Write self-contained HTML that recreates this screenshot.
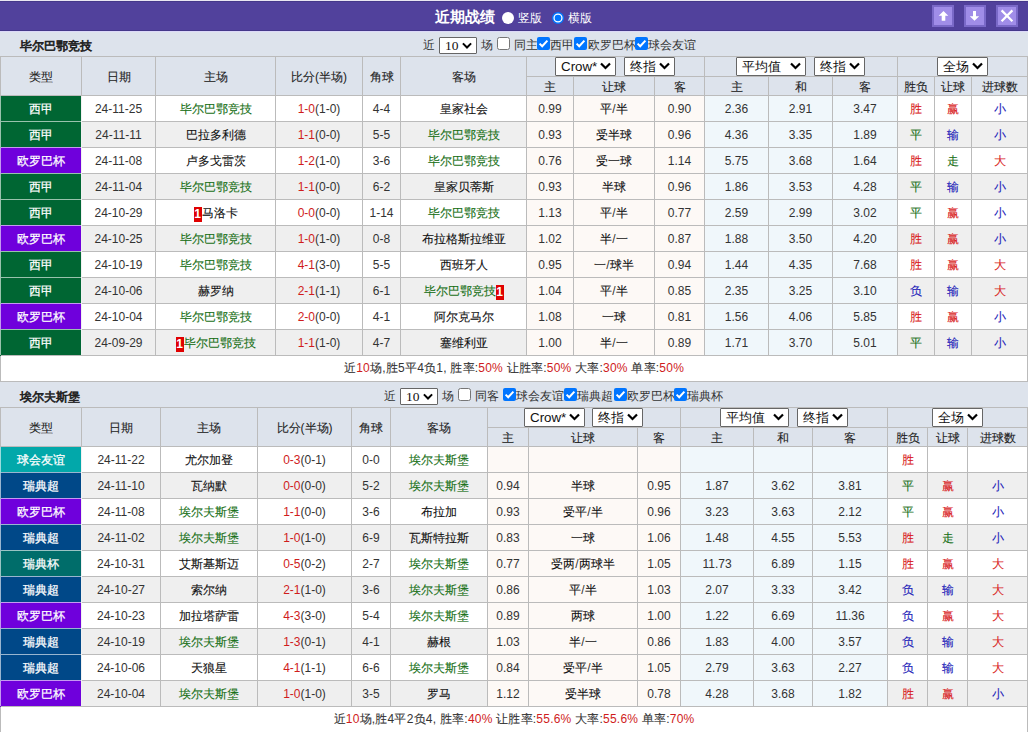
<!DOCTYPE html>
<html><head><meta charset="utf-8"><style>
html,body{margin:0;padding:0;background:#fff;width:1028px;height:732px;overflow:hidden}
body{position:relative;font-family:"Liberation Sans",sans-serif;font-size:12px;color:#333}
body div{position:absolute;box-sizing:content-box}
.c{text-align:center;white-space:nowrap;overflow:hidden}
.k{-webkit-text-stroke:0.1px currentColor}
.d{color:#111}
.w .k{-webkit-text-stroke:0.25px currentColor}
.sel{background:#fff;border:1px solid #666;border-radius:1px;color:#111;white-space:nowrap}
.rc{display:inline-block;background:#e00000;color:#fff;width:8px;height:15px;line-height:15px;text-align:center;vertical-align:-1px;font-size:12px;font-weight:bold}
svg{display:block}
</style></head><body>
<div style="left:0px;top:0px;width:1028px;height:31px;background:#51419c"></div>
<div style="left:0px;top:0px;width:1028px;height:1px;background:#e9e6f2"></div>
<div style="left:0px;top:1px;width:1028px;height:1px;background:#45388a"></div>
<div style="left:0px;top:30px;width:1028px;height:1px;background:#45388a"></div>
<div style="left:0px;top:31px;width:1028px;height:1px;background:#dcd9f8"></div>
<div style="left:435px;top:2px;height:29px;line-height:29px;font-size:15px;font-weight:bold;color:#fff;white-space:nowrap">近期战绩</div>
<div style="left:501.5px;top:11.5px;width:12px;height:12px;border-radius:50%;background:#fff"></div>
<div style="left:518px;top:3.5px;height:29px;line-height:29px;color:#fff;white-space:nowrap">竖版</div>
<div style="left:551.5px;top:11.5px;width:12px;height:12px;"><svg width="12" height="12"><circle cx="6" cy="6" r="5.3" fill="#fff" stroke="#0075ff" stroke-width="1.4"/><circle cx="6" cy="6" r="3.3" fill="#0075ff"/></svg></div>
<div style="left:568px;top:3.5px;height:29px;line-height:29px;color:#fff;white-space:nowrap">横版</div>
<div style="left:932px;top:5px;width:18px;height:18px;background:#a08de8;border:2px solid #7a69c8"><svg style="position:absolute;left:-2px;top:-2px" width="22" height="22" viewBox="0 0 22 22"><path d="M11.5 5.9 L16.3 10.8 L13.3 10.8 L13.3 15.8 L9.7 15.8 L9.7 10.8 L6.7 10.8 Z" fill="#fff"/></svg></div>
<div style="left:964px;top:5px;width:18px;height:18px;background:#a08de8;border:2px solid #7a69c8"><svg style="position:absolute;left:-2px;top:-2px" width="22" height="22" viewBox="0 0 22 22"><path d="M10.5 15.8 L15.2 11.2 L12 11.2 L12 5.9 L9 5.9 L9 11.2 L5.8 11.2 Z" fill="#fff"/></svg></div>
<div style="left:996px;top:5px;width:18px;height:18px;background:#a08de8;border:2px solid #7a69c8"><svg style="position:absolute;left:-2px;top:-2px" width="22" height="22" viewBox="0 0 22 22"><path d="M5.6 5.4 L16.4 16.2 M16.4 5.4 L5.6 16.2" stroke="#fff" stroke-width="2.2"/></svg></div>
<div style="left:0px;top:31px;width:1028px;height:25px;background:#dde3ec"></div>
<div style="left:20px;top:34px;height:25px;line-height:25px;white-space:nowrap;color:#222;-webkit-text-stroke:0.65px #222">毕尔巴鄂竞技</div>
<div style="left:423px;top:33px;height:25px;line-height:25px;white-space:nowrap;color:#333">近</div>
<div class="sel" style="left:439px;top:37px;width:36px;height:15px;line-height:16px;font-size:13.5px;font-family:Liberation Serif;text-indent:5px">10<svg width="10" height="7.3" viewBox="0 0 11 8" style="position:absolute;right:4.5px;top:3.5px"><path d="M1 1.5 L5.5 6 L10 1.5" fill="none" stroke="#000" stroke-width="2.2"/></svg></div>
<div style="left:481px;top:33px;height:25px;line-height:25px;white-space:nowrap;color:#333">场</div>
<div style="left:497px;top:37px;width:13px;height:13px"><svg width="13" height="13" viewBox="0 0 13 13"><rect x="0.5" y="0.5" width="12" height="12" rx="2" fill="#fff" stroke="#767676"/></svg></div>
<div style="left:513.5px;top:33px;height:25px;line-height:25px;white-space:nowrap;color:#333">同主</div>
<div style="left:537px;top:37px;width:13px;height:13px"><svg width="13" height="13" viewBox="0 0 13 13"><rect x="0" y="0" width="13" height="13" rx="2" fill="#0075ff"/><path d="M2.6 6.6 L5.2 9.2 L10.4 3.6" fill="none" stroke="#fff" stroke-width="2"/></svg></div>
<div style="left:550px;top:33px;height:25px;line-height:25px;white-space:nowrap;color:#333">西甲</div>
<div style="left:574px;top:37px;width:13px;height:13px"><svg width="13" height="13" viewBox="0 0 13 13"><rect x="0" y="0" width="13" height="13" rx="2" fill="#0075ff"/><path d="M2.6 6.6 L5.2 9.2 L10.4 3.6" fill="none" stroke="#fff" stroke-width="2"/></svg></div>
<div style="left:588px;top:33px;height:25px;line-height:25px;white-space:nowrap;color:#333">欧罗巴杯</div>
<div style="left:635px;top:37px;width:13px;height:13px"><svg width="13" height="13" viewBox="0 0 13 13"><rect x="0" y="0" width="13" height="13" rx="2" fill="#0075ff"/><path d="M2.6 6.6 L5.2 9.2 L10.4 3.6" fill="none" stroke="#fff" stroke-width="2"/></svg></div>
<div style="left:648px;top:33px;height:25px;line-height:25px;white-space:nowrap;color:#333">球会友谊</div>
<div style="left:0px;top:56px;width:1028px;height:39px;background:#dde3ec"></div>
<div style="left:0px;top:95px;width:1028px;height:26px;background:#ffffff"></div>
<div style="left:527px;top:96px;width:177px;height:25px;background:#fdf9f6"></div>
<div style="left:705px;top:96px;width:192px;height:25px;background:#f0f7fb"></div>
<div style="left:0px;top:96px;width:81px;height:25px;background:#006633"></div>
<div style="left:0px;top:121px;width:1028px;height:26px;background:#efefef"></div>
<div style="left:527px;top:122px;width:177px;height:25px;background:#fdf9f6"></div>
<div style="left:705px;top:122px;width:192px;height:25px;background:#f0f7fb"></div>
<div style="left:0px;top:122px;width:81px;height:25px;background:#006633"></div>
<div style="left:0px;top:147px;width:1028px;height:26px;background:#ffffff"></div>
<div style="left:527px;top:148px;width:177px;height:25px;background:#fdf9f6"></div>
<div style="left:705px;top:148px;width:192px;height:25px;background:#f0f7fb"></div>
<div style="left:0px;top:148px;width:81px;height:25px;background:#6f00dc"></div>
<div style="left:0px;top:173px;width:1028px;height:26px;background:#efefef"></div>
<div style="left:527px;top:174px;width:177px;height:25px;background:#fdf9f6"></div>
<div style="left:705px;top:174px;width:192px;height:25px;background:#f0f7fb"></div>
<div style="left:0px;top:174px;width:81px;height:25px;background:#006633"></div>
<div style="left:0px;top:199px;width:1028px;height:26px;background:#ffffff"></div>
<div style="left:527px;top:200px;width:177px;height:25px;background:#fdf9f6"></div>
<div style="left:705px;top:200px;width:192px;height:25px;background:#f0f7fb"></div>
<div style="left:0px;top:200px;width:81px;height:25px;background:#006633"></div>
<div style="left:0px;top:225px;width:1028px;height:26px;background:#efefef"></div>
<div style="left:527px;top:226px;width:177px;height:25px;background:#fdf9f6"></div>
<div style="left:705px;top:226px;width:192px;height:25px;background:#f0f7fb"></div>
<div style="left:0px;top:226px;width:81px;height:25px;background:#6f00dc"></div>
<div style="left:0px;top:251px;width:1028px;height:26px;background:#ffffff"></div>
<div style="left:527px;top:252px;width:177px;height:25px;background:#fdf9f6"></div>
<div style="left:705px;top:252px;width:192px;height:25px;background:#f0f7fb"></div>
<div style="left:0px;top:252px;width:81px;height:25px;background:#006633"></div>
<div style="left:0px;top:277px;width:1028px;height:26px;background:#efefef"></div>
<div style="left:527px;top:278px;width:177px;height:25px;background:#fdf9f6"></div>
<div style="left:705px;top:278px;width:192px;height:25px;background:#f0f7fb"></div>
<div style="left:0px;top:278px;width:81px;height:25px;background:#006633"></div>
<div style="left:0px;top:303px;width:1028px;height:26px;background:#ffffff"></div>
<div style="left:527px;top:304px;width:177px;height:25px;background:#fdf9f6"></div>
<div style="left:705px;top:304px;width:192px;height:25px;background:#f0f7fb"></div>
<div style="left:0px;top:304px;width:81px;height:25px;background:#6f00dc"></div>
<div style="left:0px;top:329px;width:1028px;height:26px;background:#efefef"></div>
<div style="left:527px;top:330px;width:177px;height:25px;background:#fdf9f6"></div>
<div style="left:705px;top:330px;width:192px;height:25px;background:#f0f7fb"></div>
<div style="left:0px;top:330px;width:81px;height:25px;background:#006633"></div>
<div style="left:0px;top:355px;width:1028px;height:26px;background:#fff"></div>
<div style="left:0px;top:56px;width:1028px;height:1px;background:#bbbbbb"></div>
<div style="left:526px;top:76px;width:502px;height:1px;background:#bbbbbb"></div>
<div style="left:0px;top:95px;width:1028px;height:1px;background:#bbbbbb"></div>
<div style="left:0px;top:121px;width:1028px;height:1px;background:#bbbbbb"></div>
<div style="left:0px;top:147px;width:1028px;height:1px;background:#bbbbbb"></div>
<div style="left:0px;top:173px;width:1028px;height:1px;background:#bbbbbb"></div>
<div style="left:0px;top:199px;width:1028px;height:1px;background:#bbbbbb"></div>
<div style="left:0px;top:225px;width:1028px;height:1px;background:#bbbbbb"></div>
<div style="left:0px;top:251px;width:1028px;height:1px;background:#bbbbbb"></div>
<div style="left:0px;top:277px;width:1028px;height:1px;background:#bbbbbb"></div>
<div style="left:0px;top:303px;width:1028px;height:1px;background:#bbbbbb"></div>
<div style="left:0px;top:329px;width:1028px;height:1px;background:#bbbbbb"></div>
<div style="left:0px;top:355px;width:1028px;height:1px;background:#bbbbbb"></div>
<div style="left:0px;top:96px;width:81px;height:25px;background:#006633"></div>
<div style="left:0px;top:121px;width:81px;height:26px;background:#006633"></div>
<div style="left:0px;top:121px;width:81px;height:1px;background:rgba(255,255,255,0.6)"></div>
<div style="left:0px;top:147px;width:81px;height:26px;background:#6f00dc"></div>
<div style="left:0px;top:147px;width:81px;height:1px;background:rgba(255,255,255,0.6)"></div>
<div style="left:0px;top:173px;width:81px;height:26px;background:#006633"></div>
<div style="left:0px;top:173px;width:81px;height:1px;background:rgba(255,255,255,0.6)"></div>
<div style="left:0px;top:199px;width:81px;height:26px;background:#006633"></div>
<div style="left:0px;top:199px;width:81px;height:1px;background:rgba(255,255,255,0.6)"></div>
<div style="left:0px;top:225px;width:81px;height:26px;background:#6f00dc"></div>
<div style="left:0px;top:225px;width:81px;height:1px;background:rgba(255,255,255,0.6)"></div>
<div style="left:0px;top:251px;width:81px;height:26px;background:#006633"></div>
<div style="left:0px;top:251px;width:81px;height:1px;background:rgba(255,255,255,0.6)"></div>
<div style="left:0px;top:277px;width:81px;height:26px;background:#006633"></div>
<div style="left:0px;top:277px;width:81px;height:1px;background:rgba(255,255,255,0.6)"></div>
<div style="left:0px;top:303px;width:81px;height:26px;background:#6f00dc"></div>
<div style="left:0px;top:303px;width:81px;height:1px;background:rgba(255,255,255,0.6)"></div>
<div style="left:0px;top:329px;width:81px;height:26px;background:#006633"></div>
<div style="left:0px;top:329px;width:81px;height:1px;background:rgba(255,255,255,0.6)"></div>
<div style="left:0px;top:56px;width:1px;height:299px;background:#bbbbbb"></div>
<div style="left:81px;top:56px;width:1px;height:299px;background:#bbbbbb"></div>
<div style="left:155px;top:56px;width:1px;height:299px;background:#bbbbbb"></div>
<div style="left:275px;top:56px;width:1px;height:299px;background:#bbbbbb"></div>
<div style="left:362px;top:56px;width:1px;height:299px;background:#bbbbbb"></div>
<div style="left:400px;top:56px;width:1px;height:299px;background:#bbbbbb"></div>
<div style="left:526px;top:56px;width:1px;height:299px;background:#bbbbbb"></div>
<div style="left:573px;top:76px;width:1px;height:279px;background:#bbbbbb"></div>
<div style="left:654px;top:76px;width:1px;height:279px;background:#bbbbbb"></div>
<div style="left:704px;top:56px;width:1px;height:299px;background:#bbbbbb"></div>
<div style="left:768px;top:76px;width:1px;height:279px;background:#bbbbbb"></div>
<div style="left:832px;top:76px;width:1px;height:279px;background:#bbbbbb"></div>
<div style="left:897px;top:56px;width:1px;height:299px;background:#bbbbbb"></div>
<div style="left:934px;top:76px;width:1px;height:279px;background:#bbbbbb"></div>
<div style="left:971px;top:76px;width:1px;height:279px;background:#bbbbbb"></div>
<div style="left:1027px;top:56px;width:1px;height:299px;background:#bbbbbb"></div>
<div style="left:0px;top:355px;width:1px;height:26px;background:#bbbbbb"></div>
<div style="left:1027px;top:355px;width:1px;height:26px;background:#bbbbbb"></div>
<div style="left:81px;top:96px;width:1px;height:259px;background:rgba(255,255,255,0.8)"></div>
<div style="left:0px;top:96px;width:1px;height:26px;background:#006633"></div>
<div style="left:0px;top:122px;width:1px;height:26px;background:#006633"></div>
<div style="left:0px;top:148px;width:1px;height:26px;background:#6f00dc"></div>
<div style="left:0px;top:174px;width:1px;height:26px;background:#006633"></div>
<div style="left:0px;top:200px;width:1px;height:26px;background:#006633"></div>
<div style="left:0px;top:226px;width:1px;height:26px;background:#6f00dc"></div>
<div style="left:0px;top:252px;width:1px;height:26px;background:#006633"></div>
<div style="left:0px;top:278px;width:1px;height:26px;background:#006633"></div>
<div style="left:0px;top:304px;width:1px;height:26px;background:#6f00dc"></div>
<div style="left:0px;top:330px;width:1px;height:26px;background:#006633"></div>
<div style="left:0px;top:96px;width:1px;height:259px;background:rgba(255,255,255,0.6)"></div>
<div class="c" style="left:1px;top:58px;width:80px;height:38px;line-height:38px;color:#222"><span class="k">类型</span></div>
<div class="c" style="left:82px;top:58px;width:73px;height:38px;line-height:38px;color:#222"><span class="k">日期</span></div>
<div class="c" style="left:156px;top:58px;width:119px;height:38px;line-height:38px;color:#222"><span class="k">主场</span></div>
<div class="c" style="left:276px;top:58px;width:86px;height:38px;line-height:38px;color:#222"><span class="k">比分</span>(<span class="k">半场</span>)</div>
<div class="c" style="left:363px;top:58px;width:37px;height:38px;line-height:38px;color:#222"><span class="k">角球</span></div>
<div class="c" style="left:401px;top:58px;width:125px;height:38px;line-height:38px;color:#222"><span class="k">客场</span></div>
<div class="c" style="left:527px;top:78px;width:46px;height:18px;line-height:18px;color:#222"><span class="k">主</span></div>
<div class="c" style="left:574px;top:78px;width:80px;height:18px;line-height:18px;color:#222"><span class="k">让球</span></div>
<div class="c" style="left:655px;top:78px;width:49px;height:18px;line-height:18px;color:#222"><span class="k">客</span></div>
<div class="c" style="left:705px;top:78px;width:63px;height:18px;line-height:18px;color:#222"><span class="k">主</span></div>
<div class="c" style="left:769px;top:78px;width:63px;height:18px;line-height:18px;color:#222"><span class="k">和</span></div>
<div class="c" style="left:833px;top:78px;width:64px;height:18px;line-height:18px;color:#222"><span class="k">客</span></div>
<div class="c" style="left:898px;top:78px;width:36px;height:18px;line-height:18px;color:#222"><span class="k">胜负</span></div>
<div class="c" style="left:935px;top:78px;width:36px;height:18px;line-height:18px;color:#222"><span class="k">让球</span></div>
<div class="c" style="left:972px;top:78px;width:55px;height:18px;line-height:18px;color:#222"><span class="k">进球数</span></div>
<div class="sel" style="left:555px;top:57px;width:59px;height:17px;line-height:18px;font-size:13.33px;text-indent:5px">Crow*<svg width="11" height="8" viewBox="0 0 11 8" style="position:absolute;right:4px;top:4px"><path d="M1 1.5 L5.5 6 L10 1.5" fill="none" stroke="#000" stroke-width="2.2"/></svg></div>
<div class="sel" style="left:624px;top:57px;width:49px;height:17px;line-height:18px;font-size:13.33px;text-indent:5px">终指<svg width="11" height="8" viewBox="0 0 11 8" style="position:absolute;right:4px;top:4px"><path d="M1 1.5 L5.5 6 L10 1.5" fill="none" stroke="#000" stroke-width="2.2"/></svg></div>
<div class="sel" style="left:736px;top:57px;width:68px;height:17px;line-height:18px;font-size:13.33px;text-indent:5px">平均值<svg width="11" height="8" viewBox="0 0 11 8" style="position:absolute;right:4px;top:4px"><path d="M1 1.5 L5.5 6 L10 1.5" fill="none" stroke="#000" stroke-width="2.2"/></svg></div>
<div class="sel" style="left:814px;top:57px;width:49px;height:17px;line-height:18px;font-size:13.33px;text-indent:5px">终指<svg width="11" height="8" viewBox="0 0 11 8" style="position:absolute;right:4px;top:4px"><path d="M1 1.5 L5.5 6 L10 1.5" fill="none" stroke="#000" stroke-width="2.2"/></svg></div>
<div class="sel" style="left:937px;top:57px;width:49px;height:17px;line-height:18px;font-size:13.33px;text-indent:5px">全场<svg width="11" height="8" viewBox="0 0 11 8" style="position:absolute;right:4px;top:4px"><path d="M1 1.5 L5.5 6 L10 1.5" fill="none" stroke="#000" stroke-width="2.2"/></svg></div>
<div class="c w" style="left:1px;top:97px;width:80px;height:25px;line-height:25px;color:#fff"><span class="k">西甲</span></div>
<div class="c" style="left:82px;top:97px;width:73px;height:25px;line-height:25px;">24-11-25</div>
<div class="c" style="left:156px;top:97px;width:119px;height:25px;line-height:25px;"><span style="color:#177016"><span class="k">毕尔巴鄂竞技</span></span></div>
<div class="c" style="left:276px;top:97px;width:86px;height:25px;line-height:25px;"><span style="color:#cf1c1c">1-0</span>(1-0)</div>
<div class="c" style="left:363px;top:97px;width:37px;height:25px;line-height:25px;">4-4</div>
<div class="c" style="left:401px;top:97px;width:125px;height:25px;line-height:25px;"><span class="k d">皇家社会</span></div>
<div class="c" style="left:527px;top:97px;width:46px;height:25px;line-height:25px;">0.99</div>
<div class="c" style="left:574px;top:97px;width:80px;height:25px;line-height:25px;"><span class="k d">平</span>/<span class="k d">半</span></div>
<div class="c" style="left:655px;top:97px;width:49px;height:25px;line-height:25px;">0.90</div>
<div class="c" style="left:705px;top:97px;width:63px;height:25px;line-height:25px;">2.36</div>
<div class="c" style="left:769px;top:97px;width:63px;height:25px;line-height:25px;">2.91</div>
<div class="c" style="left:833px;top:97px;width:64px;height:25px;line-height:25px;">3.47</div>
<div class="c" style="left:898px;top:97px;width:36px;height:25px;line-height:25px;color:#d91c1c"><span class="k">胜</span></div>
<div class="c" style="left:935px;top:97px;width:36px;height:25px;line-height:25px;color:#d91c1c"><span class="k">赢</span></div>
<div class="c" style="left:972px;top:97px;width:55px;height:25px;line-height:25px;color:#1a1ab8"><span class="k">小</span></div>
<div class="c w" style="left:1px;top:123px;width:80px;height:25px;line-height:25px;color:#fff"><span class="k">西甲</span></div>
<div class="c" style="left:82px;top:123px;width:73px;height:25px;line-height:25px;">24-11-11</div>
<div class="c" style="left:156px;top:123px;width:119px;height:25px;line-height:25px;"><span class="k d">巴拉多利德</span></div>
<div class="c" style="left:276px;top:123px;width:86px;height:25px;line-height:25px;"><span style="color:#cf1c1c">1-1</span>(0-0)</div>
<div class="c" style="left:363px;top:123px;width:37px;height:25px;line-height:25px;">5-5</div>
<div class="c" style="left:401px;top:123px;width:125px;height:25px;line-height:25px;"><span style="color:#177016"><span class="k">毕尔巴鄂竞技</span></span></div>
<div class="c" style="left:527px;top:123px;width:46px;height:25px;line-height:25px;">0.93</div>
<div class="c" style="left:574px;top:123px;width:80px;height:25px;line-height:25px;"><span class="k d">受半球</span></div>
<div class="c" style="left:655px;top:123px;width:49px;height:25px;line-height:25px;">0.96</div>
<div class="c" style="left:705px;top:123px;width:63px;height:25px;line-height:25px;">4.36</div>
<div class="c" style="left:769px;top:123px;width:63px;height:25px;line-height:25px;">3.35</div>
<div class="c" style="left:833px;top:123px;width:64px;height:25px;line-height:25px;">1.89</div>
<div class="c" style="left:898px;top:123px;width:36px;height:25px;line-height:25px;color:#177016"><span class="k">平</span></div>
<div class="c" style="left:935px;top:123px;width:36px;height:25px;line-height:25px;color:#1a1ab8"><span class="k">输</span></div>
<div class="c" style="left:972px;top:123px;width:55px;height:25px;line-height:25px;color:#1a1ab8"><span class="k">小</span></div>
<div class="c w" style="left:1px;top:149px;width:80px;height:25px;line-height:25px;color:#fff"><span class="k">欧罗巴杯</span></div>
<div class="c" style="left:82px;top:149px;width:73px;height:25px;line-height:25px;">24-11-08</div>
<div class="c" style="left:156px;top:149px;width:119px;height:25px;line-height:25px;"><span class="k d">卢多戈雷茨</span></div>
<div class="c" style="left:276px;top:149px;width:86px;height:25px;line-height:25px;"><span style="color:#cf1c1c">1-2</span>(1-0)</div>
<div class="c" style="left:363px;top:149px;width:37px;height:25px;line-height:25px;">3-6</div>
<div class="c" style="left:401px;top:149px;width:125px;height:25px;line-height:25px;"><span style="color:#177016"><span class="k">毕尔巴鄂竞技</span></span></div>
<div class="c" style="left:527px;top:149px;width:46px;height:25px;line-height:25px;">0.76</div>
<div class="c" style="left:574px;top:149px;width:80px;height:25px;line-height:25px;"><span class="k d">受一球</span></div>
<div class="c" style="left:655px;top:149px;width:49px;height:25px;line-height:25px;">1.14</div>
<div class="c" style="left:705px;top:149px;width:63px;height:25px;line-height:25px;">5.75</div>
<div class="c" style="left:769px;top:149px;width:63px;height:25px;line-height:25px;">3.68</div>
<div class="c" style="left:833px;top:149px;width:64px;height:25px;line-height:25px;">1.64</div>
<div class="c" style="left:898px;top:149px;width:36px;height:25px;line-height:25px;color:#d91c1c"><span class="k">胜</span></div>
<div class="c" style="left:935px;top:149px;width:36px;height:25px;line-height:25px;color:#177016"><span class="k">走</span></div>
<div class="c" style="left:972px;top:149px;width:55px;height:25px;line-height:25px;color:#d91c1c"><span class="k">大</span></div>
<div class="c w" style="left:1px;top:175px;width:80px;height:25px;line-height:25px;color:#fff"><span class="k">西甲</span></div>
<div class="c" style="left:82px;top:175px;width:73px;height:25px;line-height:25px;">24-11-04</div>
<div class="c" style="left:156px;top:175px;width:119px;height:25px;line-height:25px;"><span style="color:#177016"><span class="k">毕尔巴鄂竞技</span></span></div>
<div class="c" style="left:276px;top:175px;width:86px;height:25px;line-height:25px;"><span style="color:#cf1c1c">1-1</span>(0-0)</div>
<div class="c" style="left:363px;top:175px;width:37px;height:25px;line-height:25px;">6-2</div>
<div class="c" style="left:401px;top:175px;width:125px;height:25px;line-height:25px;"><span class="k d">皇家贝蒂斯</span></div>
<div class="c" style="left:527px;top:175px;width:46px;height:25px;line-height:25px;">0.93</div>
<div class="c" style="left:574px;top:175px;width:80px;height:25px;line-height:25px;"><span class="k d">半球</span></div>
<div class="c" style="left:655px;top:175px;width:49px;height:25px;line-height:25px;">0.96</div>
<div class="c" style="left:705px;top:175px;width:63px;height:25px;line-height:25px;">1.86</div>
<div class="c" style="left:769px;top:175px;width:63px;height:25px;line-height:25px;">3.53</div>
<div class="c" style="left:833px;top:175px;width:64px;height:25px;line-height:25px;">4.28</div>
<div class="c" style="left:898px;top:175px;width:36px;height:25px;line-height:25px;color:#177016"><span class="k">平</span></div>
<div class="c" style="left:935px;top:175px;width:36px;height:25px;line-height:25px;color:#1a1ab8"><span class="k">输</span></div>
<div class="c" style="left:972px;top:175px;width:55px;height:25px;line-height:25px;color:#1a1ab8"><span class="k">小</span></div>
<div class="c w" style="left:1px;top:201px;width:80px;height:25px;line-height:25px;color:#fff"><span class="k">西甲</span></div>
<div class="c" style="left:82px;top:201px;width:73px;height:25px;line-height:25px;">24-10-29</div>
<div class="c" style="left:156px;top:201px;width:119px;height:25px;line-height:25px;"><span class="rc">1</span><span class="k d">马洛卡</span></div>
<div class="c" style="left:276px;top:201px;width:86px;height:25px;line-height:25px;"><span style="color:#cf1c1c">0-0</span>(0-0)</div>
<div class="c" style="left:363px;top:201px;width:37px;height:25px;line-height:25px;">1-14</div>
<div class="c" style="left:401px;top:201px;width:125px;height:25px;line-height:25px;"><span style="color:#177016"><span class="k">毕尔巴鄂竞技</span></span></div>
<div class="c" style="left:527px;top:201px;width:46px;height:25px;line-height:25px;">1.13</div>
<div class="c" style="left:574px;top:201px;width:80px;height:25px;line-height:25px;"><span class="k d">平</span>/<span class="k d">半</span></div>
<div class="c" style="left:655px;top:201px;width:49px;height:25px;line-height:25px;">0.77</div>
<div class="c" style="left:705px;top:201px;width:63px;height:25px;line-height:25px;">2.59</div>
<div class="c" style="left:769px;top:201px;width:63px;height:25px;line-height:25px;">2.99</div>
<div class="c" style="left:833px;top:201px;width:64px;height:25px;line-height:25px;">3.02</div>
<div class="c" style="left:898px;top:201px;width:36px;height:25px;line-height:25px;color:#177016"><span class="k">平</span></div>
<div class="c" style="left:935px;top:201px;width:36px;height:25px;line-height:25px;color:#d91c1c"><span class="k">赢</span></div>
<div class="c" style="left:972px;top:201px;width:55px;height:25px;line-height:25px;color:#1a1ab8"><span class="k">小</span></div>
<div class="c w" style="left:1px;top:227px;width:80px;height:25px;line-height:25px;color:#fff"><span class="k">欧罗巴杯</span></div>
<div class="c" style="left:82px;top:227px;width:73px;height:25px;line-height:25px;">24-10-25</div>
<div class="c" style="left:156px;top:227px;width:119px;height:25px;line-height:25px;"><span style="color:#177016"><span class="k">毕尔巴鄂竞技</span></span></div>
<div class="c" style="left:276px;top:227px;width:86px;height:25px;line-height:25px;"><span style="color:#cf1c1c">1-0</span>(1-0)</div>
<div class="c" style="left:363px;top:227px;width:37px;height:25px;line-height:25px;">0-8</div>
<div class="c" style="left:401px;top:227px;width:125px;height:25px;line-height:25px;"><span class="k d">布拉格斯拉维亚</span></div>
<div class="c" style="left:527px;top:227px;width:46px;height:25px;line-height:25px;">1.02</div>
<div class="c" style="left:574px;top:227px;width:80px;height:25px;line-height:25px;"><span class="k d">半</span>/<span class="k d">一</span></div>
<div class="c" style="left:655px;top:227px;width:49px;height:25px;line-height:25px;">0.87</div>
<div class="c" style="left:705px;top:227px;width:63px;height:25px;line-height:25px;">1.88</div>
<div class="c" style="left:769px;top:227px;width:63px;height:25px;line-height:25px;">3.50</div>
<div class="c" style="left:833px;top:227px;width:64px;height:25px;line-height:25px;">4.20</div>
<div class="c" style="left:898px;top:227px;width:36px;height:25px;line-height:25px;color:#d91c1c"><span class="k">胜</span></div>
<div class="c" style="left:935px;top:227px;width:36px;height:25px;line-height:25px;color:#d91c1c"><span class="k">赢</span></div>
<div class="c" style="left:972px;top:227px;width:55px;height:25px;line-height:25px;color:#1a1ab8"><span class="k">小</span></div>
<div class="c w" style="left:1px;top:253px;width:80px;height:25px;line-height:25px;color:#fff"><span class="k">西甲</span></div>
<div class="c" style="left:82px;top:253px;width:73px;height:25px;line-height:25px;">24-10-19</div>
<div class="c" style="left:156px;top:253px;width:119px;height:25px;line-height:25px;"><span style="color:#177016"><span class="k">毕尔巴鄂竞技</span></span></div>
<div class="c" style="left:276px;top:253px;width:86px;height:25px;line-height:25px;"><span style="color:#cf1c1c">4-1</span>(3-0)</div>
<div class="c" style="left:363px;top:253px;width:37px;height:25px;line-height:25px;">5-5</div>
<div class="c" style="left:401px;top:253px;width:125px;height:25px;line-height:25px;"><span class="k d">西班牙人</span></div>
<div class="c" style="left:527px;top:253px;width:46px;height:25px;line-height:25px;">0.95</div>
<div class="c" style="left:574px;top:253px;width:80px;height:25px;line-height:25px;"><span class="k d">一</span>/<span class="k d">球半</span></div>
<div class="c" style="left:655px;top:253px;width:49px;height:25px;line-height:25px;">0.94</div>
<div class="c" style="left:705px;top:253px;width:63px;height:25px;line-height:25px;">1.44</div>
<div class="c" style="left:769px;top:253px;width:63px;height:25px;line-height:25px;">4.35</div>
<div class="c" style="left:833px;top:253px;width:64px;height:25px;line-height:25px;">7.68</div>
<div class="c" style="left:898px;top:253px;width:36px;height:25px;line-height:25px;color:#d91c1c"><span class="k">胜</span></div>
<div class="c" style="left:935px;top:253px;width:36px;height:25px;line-height:25px;color:#d91c1c"><span class="k">赢</span></div>
<div class="c" style="left:972px;top:253px;width:55px;height:25px;line-height:25px;color:#d91c1c"><span class="k">大</span></div>
<div class="c w" style="left:1px;top:279px;width:80px;height:25px;line-height:25px;color:#fff"><span class="k">西甲</span></div>
<div class="c" style="left:82px;top:279px;width:73px;height:25px;line-height:25px;">24-10-06</div>
<div class="c" style="left:156px;top:279px;width:119px;height:25px;line-height:25px;"><span class="k d">赫罗纳</span></div>
<div class="c" style="left:276px;top:279px;width:86px;height:25px;line-height:25px;"><span style="color:#cf1c1c">2-1</span>(1-1)</div>
<div class="c" style="left:363px;top:279px;width:37px;height:25px;line-height:25px;">6-1</div>
<div class="c" style="left:401px;top:279px;width:125px;height:25px;line-height:25px;"><span style="color:#177016"><span class="k">毕尔巴鄂竞技</span></span><span class="rc">1</span></div>
<div class="c" style="left:527px;top:279px;width:46px;height:25px;line-height:25px;">1.04</div>
<div class="c" style="left:574px;top:279px;width:80px;height:25px;line-height:25px;"><span class="k d">平</span>/<span class="k d">半</span></div>
<div class="c" style="left:655px;top:279px;width:49px;height:25px;line-height:25px;">0.85</div>
<div class="c" style="left:705px;top:279px;width:63px;height:25px;line-height:25px;">2.35</div>
<div class="c" style="left:769px;top:279px;width:63px;height:25px;line-height:25px;">3.25</div>
<div class="c" style="left:833px;top:279px;width:64px;height:25px;line-height:25px;">3.10</div>
<div class="c" style="left:898px;top:279px;width:36px;height:25px;line-height:25px;color:#1a1ab8"><span class="k">负</span></div>
<div class="c" style="left:935px;top:279px;width:36px;height:25px;line-height:25px;color:#1a1ab8"><span class="k">输</span></div>
<div class="c" style="left:972px;top:279px;width:55px;height:25px;line-height:25px;color:#d91c1c"><span class="k">大</span></div>
<div class="c w" style="left:1px;top:305px;width:80px;height:25px;line-height:25px;color:#fff"><span class="k">欧罗巴杯</span></div>
<div class="c" style="left:82px;top:305px;width:73px;height:25px;line-height:25px;">24-10-04</div>
<div class="c" style="left:156px;top:305px;width:119px;height:25px;line-height:25px;"><span style="color:#177016"><span class="k">毕尔巴鄂竞技</span></span></div>
<div class="c" style="left:276px;top:305px;width:86px;height:25px;line-height:25px;"><span style="color:#cf1c1c">2-0</span>(0-0)</div>
<div class="c" style="left:363px;top:305px;width:37px;height:25px;line-height:25px;">4-1</div>
<div class="c" style="left:401px;top:305px;width:125px;height:25px;line-height:25px;"><span class="k d">阿尔克马尔</span></div>
<div class="c" style="left:527px;top:305px;width:46px;height:25px;line-height:25px;">1.08</div>
<div class="c" style="left:574px;top:305px;width:80px;height:25px;line-height:25px;"><span class="k d">一球</span></div>
<div class="c" style="left:655px;top:305px;width:49px;height:25px;line-height:25px;">0.81</div>
<div class="c" style="left:705px;top:305px;width:63px;height:25px;line-height:25px;">1.56</div>
<div class="c" style="left:769px;top:305px;width:63px;height:25px;line-height:25px;">4.06</div>
<div class="c" style="left:833px;top:305px;width:64px;height:25px;line-height:25px;">5.85</div>
<div class="c" style="left:898px;top:305px;width:36px;height:25px;line-height:25px;color:#d91c1c"><span class="k">胜</span></div>
<div class="c" style="left:935px;top:305px;width:36px;height:25px;line-height:25px;color:#d91c1c"><span class="k">赢</span></div>
<div class="c" style="left:972px;top:305px;width:55px;height:25px;line-height:25px;color:#1a1ab8"><span class="k">小</span></div>
<div class="c w" style="left:1px;top:331px;width:80px;height:25px;line-height:25px;color:#fff"><span class="k">西甲</span></div>
<div class="c" style="left:82px;top:331px;width:73px;height:25px;line-height:25px;">24-09-29</div>
<div class="c" style="left:156px;top:331px;width:119px;height:25px;line-height:25px;"><span class="rc">1</span><span style="color:#177016"><span class="k">毕尔巴鄂竞技</span></span></div>
<div class="c" style="left:276px;top:331px;width:86px;height:25px;line-height:25px;"><span style="color:#cf1c1c">1-1</span>(1-0)</div>
<div class="c" style="left:363px;top:331px;width:37px;height:25px;line-height:25px;">4-7</div>
<div class="c" style="left:401px;top:331px;width:125px;height:25px;line-height:25px;"><span class="k d">塞维利亚</span></div>
<div class="c" style="left:527px;top:331px;width:46px;height:25px;line-height:25px;">1.00</div>
<div class="c" style="left:574px;top:331px;width:80px;height:25px;line-height:25px;"><span class="k d">半</span>/<span class="k d">一</span></div>
<div class="c" style="left:655px;top:331px;width:49px;height:25px;line-height:25px;">0.89</div>
<div class="c" style="left:705px;top:331px;width:63px;height:25px;line-height:25px;">1.71</div>
<div class="c" style="left:769px;top:331px;width:63px;height:25px;line-height:25px;">3.70</div>
<div class="c" style="left:833px;top:331px;width:64px;height:25px;line-height:25px;">5.01</div>
<div class="c" style="left:898px;top:331px;width:36px;height:25px;line-height:25px;color:#177016"><span class="k">平</span></div>
<div class="c" style="left:935px;top:331px;width:36px;height:25px;line-height:25px;color:#1a1ab8"><span class="k">输</span></div>
<div class="c" style="left:972px;top:331px;width:55px;height:25px;line-height:25px;color:#1a1ab8"><span class="k">小</span></div>
<div class="c" style="left:0px;top:356px;width:1028px;height:25px;line-height:25px;color:#333;letter-spacing:0.22px"><span class="k">近</span><span style="color:#cf1c1c">10</span><span class="k">场</span>,<span class="k">胜</span>5<span class="k">平</span>4<span class="k">负</span>1, <span class="k">胜率</span>:<span style="color:#cf1c1c">50%</span> <span class="k">让胜率</span>:<span style="color:#cf1c1c">50%</span> <span class="k">大率</span>:<span style="color:#cf1c1c">30%</span> <span class="k">单率</span>:<span style="color:#cf1c1c">50%</span></div>
<div style="left:0px;top:382px;width:1028px;height:25px;background:#dde3ec"></div>
<div style="left:20px;top:385px;height:25px;line-height:25px;white-space:nowrap;color:#222;-webkit-text-stroke:0.65px #222">埃尔夫斯堡</div>
<div style="left:384px;top:384px;height:25px;line-height:25px;white-space:nowrap;color:#333">近</div>
<div class="sel" style="left:400px;top:388px;width:36px;height:15px;line-height:16px;font-size:13.5px;font-family:Liberation Serif;text-indent:5px">10<svg width="10" height="7.3" viewBox="0 0 11 8" style="position:absolute;right:4.5px;top:3.5px"><path d="M1 1.5 L5.5 6 L10 1.5" fill="none" stroke="#000" stroke-width="2.2"/></svg></div>
<div style="left:442px;top:384px;height:25px;line-height:25px;white-space:nowrap;color:#333">场</div>
<div style="left:458px;top:388px;width:13px;height:13px"><svg width="13" height="13" viewBox="0 0 13 13"><rect x="0.5" y="0.5" width="12" height="12" rx="2" fill="#fff" stroke="#767676"/></svg></div>
<div style="left:475px;top:384px;height:25px;line-height:25px;white-space:nowrap;color:#333">同客</div>
<div style="left:503px;top:388px;width:13px;height:13px"><svg width="13" height="13" viewBox="0 0 13 13"><rect x="0" y="0" width="13" height="13" rx="2" fill="#0075ff"/><path d="M2.6 6.6 L5.2 9.2 L10.4 3.6" fill="none" stroke="#fff" stroke-width="2"/></svg></div>
<div style="left:516px;top:384px;height:25px;line-height:25px;white-space:nowrap;color:#333">球会友谊</div>
<div style="left:564px;top:388px;width:13px;height:13px"><svg width="13" height="13" viewBox="0 0 13 13"><rect x="0" y="0" width="13" height="13" rx="2" fill="#0075ff"/><path d="M2.6 6.6 L5.2 9.2 L10.4 3.6" fill="none" stroke="#fff" stroke-width="2"/></svg></div>
<div style="left:577px;top:384px;height:25px;line-height:25px;white-space:nowrap;color:#333">瑞典超</div>
<div style="left:614px;top:388px;width:13px;height:13px"><svg width="13" height="13" viewBox="0 0 13 13"><rect x="0" y="0" width="13" height="13" rx="2" fill="#0075ff"/><path d="M2.6 6.6 L5.2 9.2 L10.4 3.6" fill="none" stroke="#fff" stroke-width="2"/></svg></div>
<div style="left:627px;top:384px;height:25px;line-height:25px;white-space:nowrap;color:#333">欧罗巴杯</div>
<div style="left:674px;top:388px;width:13px;height:13px"><svg width="13" height="13" viewBox="0 0 13 13"><rect x="0" y="0" width="13" height="13" rx="2" fill="#0075ff"/><path d="M2.6 6.6 L5.2 9.2 L10.4 3.6" fill="none" stroke="#fff" stroke-width="2"/></svg></div>
<div style="left:687px;top:384px;height:25px;line-height:25px;white-space:nowrap;color:#333">瑞典杯</div>
<div style="left:0px;top:407px;width:1028px;height:39px;background:#dde3ec"></div>
<div style="left:0px;top:446px;width:1028px;height:26px;background:#ffffff"></div>
<div style="left:488px;top:447px;width:192px;height:25px;background:#fdf9f6"></div>
<div style="left:681px;top:447px;width:206px;height:25px;background:#f0f7fb"></div>
<div style="left:0px;top:447px;width:81px;height:25px;background:#02a8aa"></div>
<div style="left:0px;top:472px;width:1028px;height:26px;background:#efefef"></div>
<div style="left:488px;top:473px;width:192px;height:25px;background:#fdf9f6"></div>
<div style="left:681px;top:473px;width:206px;height:25px;background:#f0f7fb"></div>
<div style="left:0px;top:473px;width:81px;height:25px;background:#004888"></div>
<div style="left:0px;top:498px;width:1028px;height:26px;background:#ffffff"></div>
<div style="left:488px;top:499px;width:192px;height:25px;background:#fdf9f6"></div>
<div style="left:681px;top:499px;width:206px;height:25px;background:#f0f7fb"></div>
<div style="left:0px;top:499px;width:81px;height:25px;background:#6f00dc"></div>
<div style="left:0px;top:524px;width:1028px;height:26px;background:#efefef"></div>
<div style="left:488px;top:525px;width:192px;height:25px;background:#fdf9f6"></div>
<div style="left:681px;top:525px;width:206px;height:25px;background:#f0f7fb"></div>
<div style="left:0px;top:525px;width:81px;height:25px;background:#004888"></div>
<div style="left:0px;top:550px;width:1028px;height:26px;background:#ffffff"></div>
<div style="left:488px;top:551px;width:192px;height:25px;background:#fdf9f6"></div>
<div style="left:681px;top:551px;width:206px;height:25px;background:#f0f7fb"></div>
<div style="left:0px;top:551px;width:81px;height:25px;background:#006d6a"></div>
<div style="left:0px;top:576px;width:1028px;height:26px;background:#efefef"></div>
<div style="left:488px;top:577px;width:192px;height:25px;background:#fdf9f6"></div>
<div style="left:681px;top:577px;width:206px;height:25px;background:#f0f7fb"></div>
<div style="left:0px;top:577px;width:81px;height:25px;background:#004888"></div>
<div style="left:0px;top:602px;width:1028px;height:26px;background:#ffffff"></div>
<div style="left:488px;top:603px;width:192px;height:25px;background:#fdf9f6"></div>
<div style="left:681px;top:603px;width:206px;height:25px;background:#f0f7fb"></div>
<div style="left:0px;top:603px;width:81px;height:25px;background:#6f00dc"></div>
<div style="left:0px;top:628px;width:1028px;height:26px;background:#efefef"></div>
<div style="left:488px;top:629px;width:192px;height:25px;background:#fdf9f6"></div>
<div style="left:681px;top:629px;width:206px;height:25px;background:#f0f7fb"></div>
<div style="left:0px;top:629px;width:81px;height:25px;background:#004888"></div>
<div style="left:0px;top:654px;width:1028px;height:26px;background:#ffffff"></div>
<div style="left:488px;top:655px;width:192px;height:25px;background:#fdf9f6"></div>
<div style="left:681px;top:655px;width:206px;height:25px;background:#f0f7fb"></div>
<div style="left:0px;top:655px;width:81px;height:25px;background:#004888"></div>
<div style="left:0px;top:680px;width:1028px;height:26px;background:#efefef"></div>
<div style="left:488px;top:681px;width:192px;height:25px;background:#fdf9f6"></div>
<div style="left:681px;top:681px;width:206px;height:25px;background:#f0f7fb"></div>
<div style="left:0px;top:681px;width:81px;height:25px;background:#6f00dc"></div>
<div style="left:0px;top:706px;width:1028px;height:26px;background:#fff"></div>
<div style="left:0px;top:407px;width:1028px;height:1px;background:#bbbbbb"></div>
<div style="left:487px;top:427px;width:541px;height:1px;background:#bbbbbb"></div>
<div style="left:0px;top:446px;width:1028px;height:1px;background:#bbbbbb"></div>
<div style="left:0px;top:472px;width:1028px;height:1px;background:#bbbbbb"></div>
<div style="left:0px;top:498px;width:1028px;height:1px;background:#bbbbbb"></div>
<div style="left:0px;top:524px;width:1028px;height:1px;background:#bbbbbb"></div>
<div style="left:0px;top:550px;width:1028px;height:1px;background:#bbbbbb"></div>
<div style="left:0px;top:576px;width:1028px;height:1px;background:#bbbbbb"></div>
<div style="left:0px;top:602px;width:1028px;height:1px;background:#bbbbbb"></div>
<div style="left:0px;top:628px;width:1028px;height:1px;background:#bbbbbb"></div>
<div style="left:0px;top:654px;width:1028px;height:1px;background:#bbbbbb"></div>
<div style="left:0px;top:680px;width:1028px;height:1px;background:#bbbbbb"></div>
<div style="left:0px;top:706px;width:1028px;height:1px;background:#bbbbbb"></div>
<div style="left:0px;top:447px;width:81px;height:25px;background:#02a8aa"></div>
<div style="left:0px;top:472px;width:81px;height:26px;background:#004888"></div>
<div style="left:0px;top:472px;width:81px;height:1px;background:rgba(255,255,255,0.6)"></div>
<div style="left:0px;top:498px;width:81px;height:26px;background:#6f00dc"></div>
<div style="left:0px;top:498px;width:81px;height:1px;background:rgba(255,255,255,0.6)"></div>
<div style="left:0px;top:524px;width:81px;height:26px;background:#004888"></div>
<div style="left:0px;top:524px;width:81px;height:1px;background:rgba(255,255,255,0.6)"></div>
<div style="left:0px;top:550px;width:81px;height:26px;background:#006d6a"></div>
<div style="left:0px;top:550px;width:81px;height:1px;background:rgba(255,255,255,0.6)"></div>
<div style="left:0px;top:576px;width:81px;height:26px;background:#004888"></div>
<div style="left:0px;top:576px;width:81px;height:1px;background:rgba(255,255,255,0.6)"></div>
<div style="left:0px;top:602px;width:81px;height:26px;background:#6f00dc"></div>
<div style="left:0px;top:602px;width:81px;height:1px;background:rgba(255,255,255,0.6)"></div>
<div style="left:0px;top:628px;width:81px;height:26px;background:#004888"></div>
<div style="left:0px;top:628px;width:81px;height:1px;background:rgba(255,255,255,0.6)"></div>
<div style="left:0px;top:654px;width:81px;height:26px;background:#004888"></div>
<div style="left:0px;top:654px;width:81px;height:1px;background:rgba(255,255,255,0.6)"></div>
<div style="left:0px;top:680px;width:81px;height:26px;background:#6f00dc"></div>
<div style="left:0px;top:680px;width:81px;height:1px;background:rgba(255,255,255,0.6)"></div>
<div style="left:0px;top:407px;width:1px;height:299px;background:#bbbbbb"></div>
<div style="left:81px;top:407px;width:1px;height:299px;background:#bbbbbb"></div>
<div style="left:160px;top:407px;width:1px;height:299px;background:#bbbbbb"></div>
<div style="left:257px;top:407px;width:1px;height:299px;background:#bbbbbb"></div>
<div style="left:351px;top:407px;width:1px;height:299px;background:#bbbbbb"></div>
<div style="left:390px;top:407px;width:1px;height:299px;background:#bbbbbb"></div>
<div style="left:487px;top:407px;width:1px;height:299px;background:#bbbbbb"></div>
<div style="left:528px;top:427px;width:1px;height:279px;background:#bbbbbb"></div>
<div style="left:637px;top:427px;width:1px;height:279px;background:#bbbbbb"></div>
<div style="left:680px;top:407px;width:1px;height:299px;background:#bbbbbb"></div>
<div style="left:753px;top:427px;width:1px;height:279px;background:#bbbbbb"></div>
<div style="left:812px;top:427px;width:1px;height:279px;background:#bbbbbb"></div>
<div style="left:887px;top:407px;width:1px;height:299px;background:#bbbbbb"></div>
<div style="left:927px;top:427px;width:1px;height:279px;background:#bbbbbb"></div>
<div style="left:967px;top:427px;width:1px;height:279px;background:#bbbbbb"></div>
<div style="left:1027px;top:407px;width:1px;height:299px;background:#bbbbbb"></div>
<div style="left:0px;top:706px;width:1px;height:26px;background:#bbbbbb"></div>
<div style="left:1027px;top:706px;width:1px;height:26px;background:#bbbbbb"></div>
<div style="left:81px;top:447px;width:1px;height:259px;background:rgba(255,255,255,0.8)"></div>
<div style="left:0px;top:447px;width:1px;height:26px;background:#02a8aa"></div>
<div style="left:0px;top:473px;width:1px;height:26px;background:#004888"></div>
<div style="left:0px;top:499px;width:1px;height:26px;background:#6f00dc"></div>
<div style="left:0px;top:525px;width:1px;height:26px;background:#004888"></div>
<div style="left:0px;top:551px;width:1px;height:26px;background:#006d6a"></div>
<div style="left:0px;top:577px;width:1px;height:26px;background:#004888"></div>
<div style="left:0px;top:603px;width:1px;height:26px;background:#6f00dc"></div>
<div style="left:0px;top:629px;width:1px;height:26px;background:#004888"></div>
<div style="left:0px;top:655px;width:1px;height:26px;background:#004888"></div>
<div style="left:0px;top:681px;width:1px;height:26px;background:#6f00dc"></div>
<div style="left:0px;top:447px;width:1px;height:259px;background:rgba(255,255,255,0.6)"></div>
<div class="c" style="left:1px;top:409px;width:80px;height:38px;line-height:38px;color:#222"><span class="k">类型</span></div>
<div class="c" style="left:82px;top:409px;width:78px;height:38px;line-height:38px;color:#222"><span class="k">日期</span></div>
<div class="c" style="left:161px;top:409px;width:96px;height:38px;line-height:38px;color:#222"><span class="k">主场</span></div>
<div class="c" style="left:258px;top:409px;width:93px;height:38px;line-height:38px;color:#222"><span class="k">比分</span>(<span class="k">半场</span>)</div>
<div class="c" style="left:352px;top:409px;width:38px;height:38px;line-height:38px;color:#222"><span class="k">角球</span></div>
<div class="c" style="left:391px;top:409px;width:96px;height:38px;line-height:38px;color:#222"><span class="k">客场</span></div>
<div class="c" style="left:488px;top:429px;width:40px;height:18px;line-height:18px;color:#222"><span class="k">主</span></div>
<div class="c" style="left:529px;top:429px;width:108px;height:18px;line-height:18px;color:#222"><span class="k">让球</span></div>
<div class="c" style="left:638px;top:429px;width:42px;height:18px;line-height:18px;color:#222"><span class="k">客</span></div>
<div class="c" style="left:681px;top:429px;width:72px;height:18px;line-height:18px;color:#222"><span class="k">主</span></div>
<div class="c" style="left:754px;top:429px;width:58px;height:18px;line-height:18px;color:#222"><span class="k">和</span></div>
<div class="c" style="left:813px;top:429px;width:74px;height:18px;line-height:18px;color:#222"><span class="k">客</span></div>
<div class="c" style="left:888px;top:429px;width:39px;height:18px;line-height:18px;color:#222"><span class="k">胜负</span></div>
<div class="c" style="left:928px;top:429px;width:39px;height:18px;line-height:18px;color:#222"><span class="k">让球</span></div>
<div class="c" style="left:968px;top:429px;width:59px;height:18px;line-height:18px;color:#222"><span class="k">进球数</span></div>
<div class="sel" style="left:524px;top:408px;width:59px;height:17px;line-height:18px;font-size:13.33px;text-indent:5px">Crow*<svg width="11" height="8" viewBox="0 0 11 8" style="position:absolute;right:4px;top:4px"><path d="M1 1.5 L5.5 6 L10 1.5" fill="none" stroke="#000" stroke-width="2.2"/></svg></div>
<div class="sel" style="left:592px;top:408px;width:49px;height:17px;line-height:18px;font-size:13.33px;text-indent:5px">终指<svg width="11" height="8" viewBox="0 0 11 8" style="position:absolute;right:4px;top:4px"><path d="M1 1.5 L5.5 6 L10 1.5" fill="none" stroke="#000" stroke-width="2.2"/></svg></div>
<div class="sel" style="left:720px;top:408px;width:67px;height:17px;line-height:18px;font-size:13.33px;text-indent:5px">平均值<svg width="11" height="8" viewBox="0 0 11 8" style="position:absolute;right:4px;top:4px"><path d="M1 1.5 L5.5 6 L10 1.5" fill="none" stroke="#000" stroke-width="2.2"/></svg></div>
<div class="sel" style="left:797px;top:408px;width:49px;height:17px;line-height:18px;font-size:13.33px;text-indent:5px">终指<svg width="11" height="8" viewBox="0 0 11 8" style="position:absolute;right:4px;top:4px"><path d="M1 1.5 L5.5 6 L10 1.5" fill="none" stroke="#000" stroke-width="2.2"/></svg></div>
<div class="sel" style="left:932px;top:408px;width:49px;height:17px;line-height:18px;font-size:13.33px;text-indent:5px">全场<svg width="11" height="8" viewBox="0 0 11 8" style="position:absolute;right:4px;top:4px"><path d="M1 1.5 L5.5 6 L10 1.5" fill="none" stroke="#000" stroke-width="2.2"/></svg></div>
<div class="c w" style="left:1px;top:448px;width:80px;height:25px;line-height:25px;color:#fff"><span class="k">球会友谊</span></div>
<div class="c" style="left:82px;top:448px;width:78px;height:25px;line-height:25px;">24-11-22</div>
<div class="c" style="left:161px;top:448px;width:96px;height:25px;line-height:25px;"><span class="k d">尤尔加登</span></div>
<div class="c" style="left:258px;top:448px;width:93px;height:25px;line-height:25px;"><span style="color:#cf1c1c">0-3</span>(0-1)</div>
<div class="c" style="left:352px;top:448px;width:38px;height:25px;line-height:25px;">0-0</div>
<div class="c" style="left:391px;top:448px;width:96px;height:25px;line-height:25px;"><span style="color:#177016"><span class="k">埃尔夫斯堡</span></span></div>
<div class="c" style="left:488px;top:448px;width:40px;height:25px;line-height:25px;"></div>
<div class="c" style="left:529px;top:448px;width:108px;height:25px;line-height:25px;"></div>
<div class="c" style="left:638px;top:448px;width:42px;height:25px;line-height:25px;"></div>
<div class="c" style="left:681px;top:448px;width:72px;height:25px;line-height:25px;"></div>
<div class="c" style="left:754px;top:448px;width:58px;height:25px;line-height:25px;"></div>
<div class="c" style="left:813px;top:448px;width:74px;height:25px;line-height:25px;"></div>
<div class="c" style="left:888px;top:448px;width:39px;height:25px;line-height:25px;color:#d91c1c"><span class="k">胜</span></div>
<div class="c" style="left:928px;top:448px;width:39px;height:25px;line-height:25px;color:"></div>
<div class="c" style="left:968px;top:448px;width:59px;height:25px;line-height:25px;color:"></div>
<div class="c w" style="left:1px;top:474px;width:80px;height:25px;line-height:25px;color:#fff"><span class="k">瑞典超</span></div>
<div class="c" style="left:82px;top:474px;width:78px;height:25px;line-height:25px;">24-11-10</div>
<div class="c" style="left:161px;top:474px;width:96px;height:25px;line-height:25px;"><span class="k d">瓦纳默</span></div>
<div class="c" style="left:258px;top:474px;width:93px;height:25px;line-height:25px;"><span style="color:#cf1c1c">0-0</span>(0-0)</div>
<div class="c" style="left:352px;top:474px;width:38px;height:25px;line-height:25px;">5-2</div>
<div class="c" style="left:391px;top:474px;width:96px;height:25px;line-height:25px;"><span style="color:#177016"><span class="k">埃尔夫斯堡</span></span></div>
<div class="c" style="left:488px;top:474px;width:40px;height:25px;line-height:25px;">0.94</div>
<div class="c" style="left:529px;top:474px;width:108px;height:25px;line-height:25px;"><span class="k d">半球</span></div>
<div class="c" style="left:638px;top:474px;width:42px;height:25px;line-height:25px;">0.95</div>
<div class="c" style="left:681px;top:474px;width:72px;height:25px;line-height:25px;">1.87</div>
<div class="c" style="left:754px;top:474px;width:58px;height:25px;line-height:25px;">3.62</div>
<div class="c" style="left:813px;top:474px;width:74px;height:25px;line-height:25px;">3.81</div>
<div class="c" style="left:888px;top:474px;width:39px;height:25px;line-height:25px;color:#177016"><span class="k">平</span></div>
<div class="c" style="left:928px;top:474px;width:39px;height:25px;line-height:25px;color:#d91c1c"><span class="k">赢</span></div>
<div class="c" style="left:968px;top:474px;width:59px;height:25px;line-height:25px;color:#1a1ab8"><span class="k">小</span></div>
<div class="c w" style="left:1px;top:500px;width:80px;height:25px;line-height:25px;color:#fff"><span class="k">欧罗巴杯</span></div>
<div class="c" style="left:82px;top:500px;width:78px;height:25px;line-height:25px;">24-11-08</div>
<div class="c" style="left:161px;top:500px;width:96px;height:25px;line-height:25px;"><span style="color:#177016"><span class="k">埃尔夫斯堡</span></span></div>
<div class="c" style="left:258px;top:500px;width:93px;height:25px;line-height:25px;"><span style="color:#cf1c1c">1-1</span>(0-0)</div>
<div class="c" style="left:352px;top:500px;width:38px;height:25px;line-height:25px;">3-6</div>
<div class="c" style="left:391px;top:500px;width:96px;height:25px;line-height:25px;"><span class="k d">布拉加</span></div>
<div class="c" style="left:488px;top:500px;width:40px;height:25px;line-height:25px;">0.93</div>
<div class="c" style="left:529px;top:500px;width:108px;height:25px;line-height:25px;"><span class="k d">受平</span>/<span class="k d">半</span></div>
<div class="c" style="left:638px;top:500px;width:42px;height:25px;line-height:25px;">0.96</div>
<div class="c" style="left:681px;top:500px;width:72px;height:25px;line-height:25px;">3.23</div>
<div class="c" style="left:754px;top:500px;width:58px;height:25px;line-height:25px;">3.63</div>
<div class="c" style="left:813px;top:500px;width:74px;height:25px;line-height:25px;">2.12</div>
<div class="c" style="left:888px;top:500px;width:39px;height:25px;line-height:25px;color:#177016"><span class="k">平</span></div>
<div class="c" style="left:928px;top:500px;width:39px;height:25px;line-height:25px;color:#d91c1c"><span class="k">赢</span></div>
<div class="c" style="left:968px;top:500px;width:59px;height:25px;line-height:25px;color:#1a1ab8"><span class="k">小</span></div>
<div class="c w" style="left:1px;top:526px;width:80px;height:25px;line-height:25px;color:#fff"><span class="k">瑞典超</span></div>
<div class="c" style="left:82px;top:526px;width:78px;height:25px;line-height:25px;">24-11-02</div>
<div class="c" style="left:161px;top:526px;width:96px;height:25px;line-height:25px;"><span style="color:#177016"><span class="k">埃尔夫斯堡</span></span></div>
<div class="c" style="left:258px;top:526px;width:93px;height:25px;line-height:25px;"><span style="color:#cf1c1c">1-0</span>(1-0)</div>
<div class="c" style="left:352px;top:526px;width:38px;height:25px;line-height:25px;">6-9</div>
<div class="c" style="left:391px;top:526px;width:96px;height:25px;line-height:25px;"><span class="k d">瓦斯特拉斯</span></div>
<div class="c" style="left:488px;top:526px;width:40px;height:25px;line-height:25px;">0.83</div>
<div class="c" style="left:529px;top:526px;width:108px;height:25px;line-height:25px;"><span class="k d">一球</span></div>
<div class="c" style="left:638px;top:526px;width:42px;height:25px;line-height:25px;">1.06</div>
<div class="c" style="left:681px;top:526px;width:72px;height:25px;line-height:25px;">1.48</div>
<div class="c" style="left:754px;top:526px;width:58px;height:25px;line-height:25px;">4.55</div>
<div class="c" style="left:813px;top:526px;width:74px;height:25px;line-height:25px;">5.53</div>
<div class="c" style="left:888px;top:526px;width:39px;height:25px;line-height:25px;color:#d91c1c"><span class="k">胜</span></div>
<div class="c" style="left:928px;top:526px;width:39px;height:25px;line-height:25px;color:#177016"><span class="k">走</span></div>
<div class="c" style="left:968px;top:526px;width:59px;height:25px;line-height:25px;color:#1a1ab8"><span class="k">小</span></div>
<div class="c w" style="left:1px;top:552px;width:80px;height:25px;line-height:25px;color:#fff"><span class="k">瑞典杯</span></div>
<div class="c" style="left:82px;top:552px;width:78px;height:25px;line-height:25px;">24-10-31</div>
<div class="c" style="left:161px;top:552px;width:96px;height:25px;line-height:25px;"><span class="k d">艾斯基斯迈</span></div>
<div class="c" style="left:258px;top:552px;width:93px;height:25px;line-height:25px;"><span style="color:#cf1c1c">0-5</span>(0-2)</div>
<div class="c" style="left:352px;top:552px;width:38px;height:25px;line-height:25px;">2-7</div>
<div class="c" style="left:391px;top:552px;width:96px;height:25px;line-height:25px;"><span style="color:#177016"><span class="k">埃尔夫斯堡</span></span></div>
<div class="c" style="left:488px;top:552px;width:40px;height:25px;line-height:25px;">0.77</div>
<div class="c" style="left:529px;top:552px;width:108px;height:25px;line-height:25px;"><span class="k d">受两</span>/<span class="k d">两球半</span></div>
<div class="c" style="left:638px;top:552px;width:42px;height:25px;line-height:25px;">1.05</div>
<div class="c" style="left:681px;top:552px;width:72px;height:25px;line-height:25px;">11.73</div>
<div class="c" style="left:754px;top:552px;width:58px;height:25px;line-height:25px;">6.89</div>
<div class="c" style="left:813px;top:552px;width:74px;height:25px;line-height:25px;">1.15</div>
<div class="c" style="left:888px;top:552px;width:39px;height:25px;line-height:25px;color:#d91c1c"><span class="k">胜</span></div>
<div class="c" style="left:928px;top:552px;width:39px;height:25px;line-height:25px;color:#d91c1c"><span class="k">赢</span></div>
<div class="c" style="left:968px;top:552px;width:59px;height:25px;line-height:25px;color:#d91c1c"><span class="k">大</span></div>
<div class="c w" style="left:1px;top:578px;width:80px;height:25px;line-height:25px;color:#fff"><span class="k">瑞典超</span></div>
<div class="c" style="left:82px;top:578px;width:78px;height:25px;line-height:25px;">24-10-27</div>
<div class="c" style="left:161px;top:578px;width:96px;height:25px;line-height:25px;"><span class="k d">索尔纳</span></div>
<div class="c" style="left:258px;top:578px;width:93px;height:25px;line-height:25px;"><span style="color:#cf1c1c">2-1</span>(1-0)</div>
<div class="c" style="left:352px;top:578px;width:38px;height:25px;line-height:25px;">3-6</div>
<div class="c" style="left:391px;top:578px;width:96px;height:25px;line-height:25px;"><span style="color:#177016"><span class="k">埃尔夫斯堡</span></span></div>
<div class="c" style="left:488px;top:578px;width:40px;height:25px;line-height:25px;">0.86</div>
<div class="c" style="left:529px;top:578px;width:108px;height:25px;line-height:25px;"><span class="k d">平</span>/<span class="k d">半</span></div>
<div class="c" style="left:638px;top:578px;width:42px;height:25px;line-height:25px;">1.03</div>
<div class="c" style="left:681px;top:578px;width:72px;height:25px;line-height:25px;">2.07</div>
<div class="c" style="left:754px;top:578px;width:58px;height:25px;line-height:25px;">3.33</div>
<div class="c" style="left:813px;top:578px;width:74px;height:25px;line-height:25px;">3.42</div>
<div class="c" style="left:888px;top:578px;width:39px;height:25px;line-height:25px;color:#1a1ab8"><span class="k">负</span></div>
<div class="c" style="left:928px;top:578px;width:39px;height:25px;line-height:25px;color:#1a1ab8"><span class="k">输</span></div>
<div class="c" style="left:968px;top:578px;width:59px;height:25px;line-height:25px;color:#d91c1c"><span class="k">大</span></div>
<div class="c w" style="left:1px;top:604px;width:80px;height:25px;line-height:25px;color:#fff"><span class="k">欧罗巴杯</span></div>
<div class="c" style="left:82px;top:604px;width:78px;height:25px;line-height:25px;">24-10-23</div>
<div class="c" style="left:161px;top:604px;width:96px;height:25px;line-height:25px;"><span class="k d">加拉塔萨雷</span></div>
<div class="c" style="left:258px;top:604px;width:93px;height:25px;line-height:25px;"><span style="color:#cf1c1c">4-3</span>(3-0)</div>
<div class="c" style="left:352px;top:604px;width:38px;height:25px;line-height:25px;">5-4</div>
<div class="c" style="left:391px;top:604px;width:96px;height:25px;line-height:25px;"><span style="color:#177016"><span class="k">埃尔夫斯堡</span></span></div>
<div class="c" style="left:488px;top:604px;width:40px;height:25px;line-height:25px;">0.89</div>
<div class="c" style="left:529px;top:604px;width:108px;height:25px;line-height:25px;"><span class="k d">两球</span></div>
<div class="c" style="left:638px;top:604px;width:42px;height:25px;line-height:25px;">1.00</div>
<div class="c" style="left:681px;top:604px;width:72px;height:25px;line-height:25px;">1.22</div>
<div class="c" style="left:754px;top:604px;width:58px;height:25px;line-height:25px;">6.69</div>
<div class="c" style="left:813px;top:604px;width:74px;height:25px;line-height:25px;">11.36</div>
<div class="c" style="left:888px;top:604px;width:39px;height:25px;line-height:25px;color:#1a1ab8"><span class="k">负</span></div>
<div class="c" style="left:928px;top:604px;width:39px;height:25px;line-height:25px;color:#d91c1c"><span class="k">赢</span></div>
<div class="c" style="left:968px;top:604px;width:59px;height:25px;line-height:25px;color:#d91c1c"><span class="k">大</span></div>
<div class="c w" style="left:1px;top:630px;width:80px;height:25px;line-height:25px;color:#fff"><span class="k">瑞典超</span></div>
<div class="c" style="left:82px;top:630px;width:78px;height:25px;line-height:25px;">24-10-19</div>
<div class="c" style="left:161px;top:630px;width:96px;height:25px;line-height:25px;"><span style="color:#177016"><span class="k">埃尔夫斯堡</span></span></div>
<div class="c" style="left:258px;top:630px;width:93px;height:25px;line-height:25px;"><span style="color:#cf1c1c">1-3</span>(0-1)</div>
<div class="c" style="left:352px;top:630px;width:38px;height:25px;line-height:25px;">4-1</div>
<div class="c" style="left:391px;top:630px;width:96px;height:25px;line-height:25px;"><span class="k d">赫根</span></div>
<div class="c" style="left:488px;top:630px;width:40px;height:25px;line-height:25px;">1.03</div>
<div class="c" style="left:529px;top:630px;width:108px;height:25px;line-height:25px;"><span class="k d">半</span>/<span class="k d">一</span></div>
<div class="c" style="left:638px;top:630px;width:42px;height:25px;line-height:25px;">0.86</div>
<div class="c" style="left:681px;top:630px;width:72px;height:25px;line-height:25px;">1.83</div>
<div class="c" style="left:754px;top:630px;width:58px;height:25px;line-height:25px;">4.00</div>
<div class="c" style="left:813px;top:630px;width:74px;height:25px;line-height:25px;">3.57</div>
<div class="c" style="left:888px;top:630px;width:39px;height:25px;line-height:25px;color:#1a1ab8"><span class="k">负</span></div>
<div class="c" style="left:928px;top:630px;width:39px;height:25px;line-height:25px;color:#1a1ab8"><span class="k">输</span></div>
<div class="c" style="left:968px;top:630px;width:59px;height:25px;line-height:25px;color:#d91c1c"><span class="k">大</span></div>
<div class="c w" style="left:1px;top:656px;width:80px;height:25px;line-height:25px;color:#fff"><span class="k">瑞典超</span></div>
<div class="c" style="left:82px;top:656px;width:78px;height:25px;line-height:25px;">24-10-06</div>
<div class="c" style="left:161px;top:656px;width:96px;height:25px;line-height:25px;"><span class="k d">天狼星</span></div>
<div class="c" style="left:258px;top:656px;width:93px;height:25px;line-height:25px;"><span style="color:#cf1c1c">4-1</span>(1-1)</div>
<div class="c" style="left:352px;top:656px;width:38px;height:25px;line-height:25px;">6-6</div>
<div class="c" style="left:391px;top:656px;width:96px;height:25px;line-height:25px;"><span style="color:#177016"><span class="k">埃尔夫斯堡</span></span></div>
<div class="c" style="left:488px;top:656px;width:40px;height:25px;line-height:25px;">0.84</div>
<div class="c" style="left:529px;top:656px;width:108px;height:25px;line-height:25px;"><span class="k d">受平</span>/<span class="k d">半</span></div>
<div class="c" style="left:638px;top:656px;width:42px;height:25px;line-height:25px;">1.05</div>
<div class="c" style="left:681px;top:656px;width:72px;height:25px;line-height:25px;">2.79</div>
<div class="c" style="left:754px;top:656px;width:58px;height:25px;line-height:25px;">3.63</div>
<div class="c" style="left:813px;top:656px;width:74px;height:25px;line-height:25px;">2.27</div>
<div class="c" style="left:888px;top:656px;width:39px;height:25px;line-height:25px;color:#1a1ab8"><span class="k">负</span></div>
<div class="c" style="left:928px;top:656px;width:39px;height:25px;line-height:25px;color:#1a1ab8"><span class="k">输</span></div>
<div class="c" style="left:968px;top:656px;width:59px;height:25px;line-height:25px;color:#d91c1c"><span class="k">大</span></div>
<div class="c w" style="left:1px;top:682px;width:80px;height:25px;line-height:25px;color:#fff"><span class="k">欧罗巴杯</span></div>
<div class="c" style="left:82px;top:682px;width:78px;height:25px;line-height:25px;">24-10-04</div>
<div class="c" style="left:161px;top:682px;width:96px;height:25px;line-height:25px;"><span style="color:#177016"><span class="k">埃尔夫斯堡</span></span></div>
<div class="c" style="left:258px;top:682px;width:93px;height:25px;line-height:25px;"><span style="color:#cf1c1c">1-0</span>(1-0)</div>
<div class="c" style="left:352px;top:682px;width:38px;height:25px;line-height:25px;">3-5</div>
<div class="c" style="left:391px;top:682px;width:96px;height:25px;line-height:25px;"><span class="k d">罗马</span></div>
<div class="c" style="left:488px;top:682px;width:40px;height:25px;line-height:25px;">1.12</div>
<div class="c" style="left:529px;top:682px;width:108px;height:25px;line-height:25px;"><span class="k d">受半球</span></div>
<div class="c" style="left:638px;top:682px;width:42px;height:25px;line-height:25px;">0.78</div>
<div class="c" style="left:681px;top:682px;width:72px;height:25px;line-height:25px;">4.28</div>
<div class="c" style="left:754px;top:682px;width:58px;height:25px;line-height:25px;">3.68</div>
<div class="c" style="left:813px;top:682px;width:74px;height:25px;line-height:25px;">1.82</div>
<div class="c" style="left:888px;top:682px;width:39px;height:25px;line-height:25px;color:#d91c1c"><span class="k">胜</span></div>
<div class="c" style="left:928px;top:682px;width:39px;height:25px;line-height:25px;color:#d91c1c"><span class="k">赢</span></div>
<div class="c" style="left:968px;top:682px;width:59px;height:25px;line-height:25px;color:#1a1ab8"><span class="k">小</span></div>
<div class="c" style="left:0px;top:707px;width:1028px;height:25px;line-height:25px;color:#333;letter-spacing:0.22px"><span class="k">近</span><span style="color:#cf1c1c">10</span><span class="k">场</span>,<span class="k">胜</span>4<span class="k">平</span>2<span class="k">负</span>4, <span class="k">胜率</span>:<span style="color:#cf1c1c">40%</span> <span class="k">让胜率</span>:<span style="color:#cf1c1c">55.6%</span> <span class="k">大率</span>:<span style="color:#cf1c1c">55.6%</span> <span class="k">单率</span>:<span style="color:#cf1c1c">70%</span></div>
<div style="left:0px;top:381px;width:1028px;height:1px;background:#bbbbbb"></div>
<div style="left:0px;top:31px;width:1028px;height:1px;background:#dcd9f8"></div>
</body></html>
